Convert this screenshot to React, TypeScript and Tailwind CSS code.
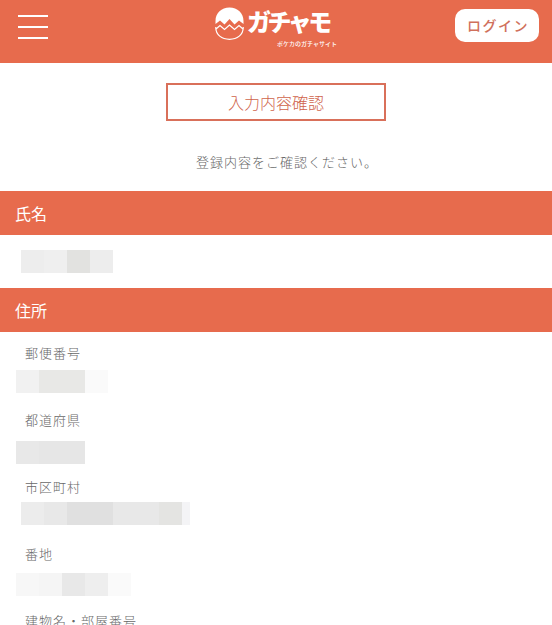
import React from 'react';

const jp = "font-['Noto_Sans_CJK_JP','Noto_Sans',sans-serif]";

interface Field {
  label: string;
  labelClass: string;
  blurClass: string;
  cells: string[];
}

const fields: Field[] = [
  {
    label: '郵便番号',
    labelClass: 'h-[27px]',
    blurClass: 'ml-[16px]',
    cells: ['bg-[#f1f1f1]', 'bg-[#e8e8e6]', 'bg-[#e8e8e6]', 'bg-[#fafafa]'],
  },
  {
    label: '都道府県',
    labelClass: 'h-[31px]',
    blurClass: 'ml-[16px]',
    cells: ['bg-[#e8e8e8]', 'bg-[#e6e6e6]', 'bg-[#e6e6e6]'],
  },
  {
    label: '市区町村',
    labelClass: 'h-[25px]',
    blurClass: 'ml-[21px]',
    cells: ['bg-[#ececec]', 'bg-[#e8e8e8]', 'bg-[#e0e0e0]', 'bg-[#e0e0e0]', 'bg-[#e8e8e8]', 'bg-[#e8e8e8]', 'bg-[#e4e4e2]', 'bg-[#f4f4f6]'],
  },
  {
    label: '番地',
    labelClass: 'h-[29px]',
    blurClass: 'ml-[16px]',
    cells: ['bg-[#f7f7f7]', 'bg-[#f5f5f5]', 'bg-[#e8e8e8]', 'bg-[#eeeeee]', 'bg-[#fafafa]'],
  },
];

const Blur = ({ cells, className }: { cells: string[]; className: string }) => (
  <div className={`flex h-[23px] ${className}`}>
    {cells.map((c, i) => (
      <div key={i} className={`h-full ${i === 7 ? 'w-[8px]' : 'w-[23px]'} ${c}`} />
    ))}
  </div>
);

const Logo = () => (
  <div className="flex w-[122px] items-start gap-[3px] text-white">
    <svg width="29" height="33" viewBox="0 0 29 33" className="mt-[7px] shrink-0">
      <path d="M0.5 14 C0.5 6 6.500 0.500 14.500 0.500 C22.500 0.500 28.500 6 28.500 14 L28.500 17 L24 13.500 L19.500 17.500 L14.500 12 L9.500 17.500 L5 13.500 L0.500 17 Z" fill="#fff" />
      <path d="M1 22 L5 18.500 L9.500 22.500 L14.500 18 L19.500 22.500 L24 18.500 L28 22" fill="none" stroke="#fff" strokeWidth="1.2" />
      <path d="M0.800 20 C0.500 28 7 32.300 14.500 32.300 C22 32.300 28.500 28 28.200 20" fill="none" stroke="#fff" strokeWidth="1.2" />
    </svg>
    <div className="flex flex-1 flex-col">
      <span className="mt-[5px] h-[31px] text-[24px] leading-[31px] font-black tracking-[-3.5px] whitespace-nowrap">ガチャモ</span>
      <span className="mt-[4px] self-end text-[6px] leading-[8px] font-medium whitespace-nowrap">ポケカのガチャサイト</span>
    </div>
  </div>
);

export default function App() {
  return (
    <div className={`${jp} h-screen overflow-hidden bg-white text-[#686868]`}>
      <header className="relative flex h-[63px] items-start justify-center bg-[#e76b4d]">
        <button className="absolute left-[18px] top-[15px] flex h-[24px] w-[30px] flex-col justify-between">
          <span className="h-[2px] w-full bg-white" />
          <span className="h-[2px] w-full bg-white" />
          <span className="h-[2px] w-full bg-white" />
        </button>
        <Logo />
        <button className="absolute right-[13px] top-[9px] flex h-[33px] w-[84px] items-center justify-center rounded-[10px] bg-white pl-[2px] text-[14px] font-medium tracking-[1.5px] text-[#d0705c]">
          ログイン
        </button>
      </header>

      <div className="flex justify-center pt-[20px]">
        <div className="flex h-[38px] w-[220px] items-center justify-center border-2 border-[#d9705a] text-[16px] font-light text-[#cf644c]">
          入力内容確認
        </div>
      </div>

      <p className="mt-[31px] pl-[22px] text-center text-[13px] leading-[20px] font-light tracking-[1px]">
        登録内容をご確認ください。
      </p>

      <h2 className="mt-[19px] flex h-[44px] items-center bg-[#e76b4d] pl-[15px] text-[16px] text-white">氏名</h2>
      <div className="h-[53px] pt-[15px]">
        <Blur cells={['bg-[#ededed]', 'bg-[#efefef]', 'bg-[#e2e2e0]', 'bg-[#ededed]']} className="ml-[21px]" />
      </div>

      <h2 className="flex h-[44px] items-center bg-[#e76b4d] pl-[15px] text-[16px] text-white">住所</h2>
      <div className="pt-[11px]">
        {fields.map(f => (
          <div key={f.label} className="h-[67px]">
            <div className={`pl-[25px] text-[13px] leading-[20px] font-light tracking-[1px] ${f.labelClass}`}>{f.label}</div>
            <Blur cells={f.cells} className={f.blurClass} />
          </div>
        ))}
        <div className="pl-[25px] text-[13px] leading-[20px] font-light tracking-[1px]">建物名・部屋番号</div>
      </div>
    </div>
  );
}
